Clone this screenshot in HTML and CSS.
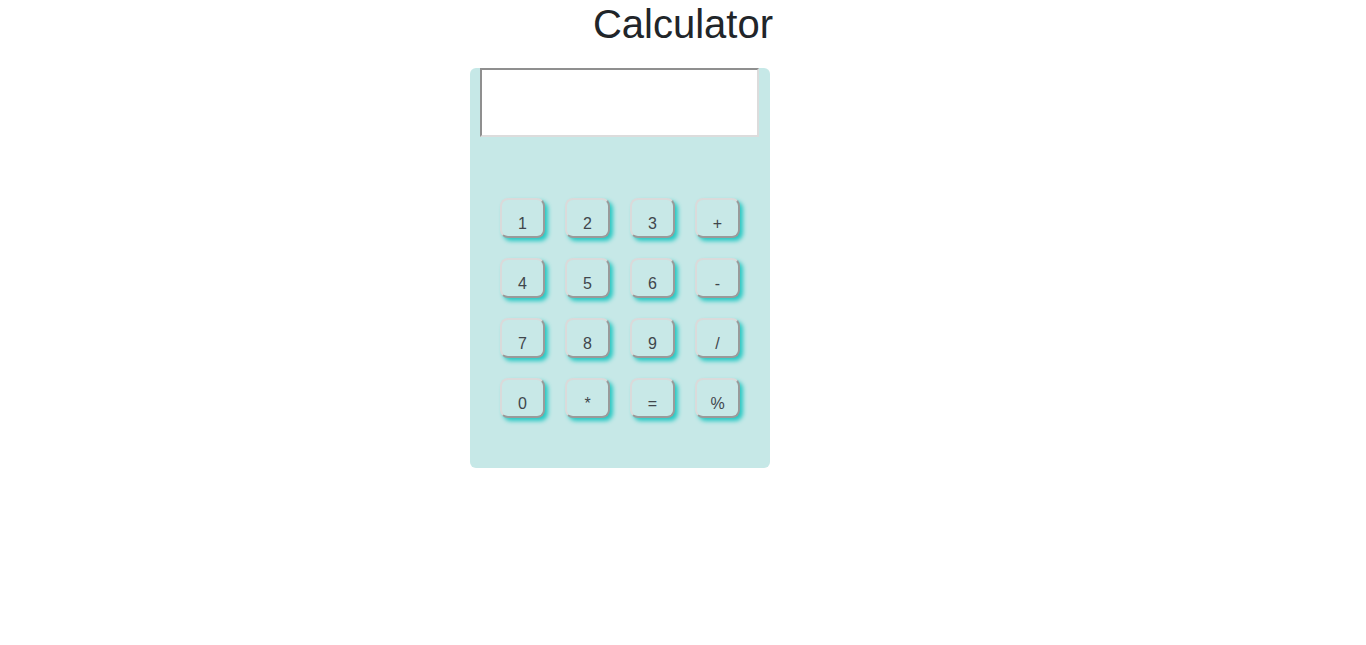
FILE: index.html
```html
<!DOCTYPE html>
<html>
<head>
<meta charset="utf-8">
<link rel="stylesheet" href="styles.css">
</head>
<body>
<h1 class="title">Calculator</h1>
<div class="calc">
  <input class="screen" type="text">
  <div class="keys">
    <button class="key">1</button>
    <button class="key">2</button>
    <button class="key">3</button>
    <button class="key">+</button>
    <button class="key">4</button>
    <button class="key">5</button>
    <button class="key">6</button>
    <button class="key">-</button>
    <button class="key">7</button>
    <button class="key">8</button>
    <button class="key">9</button>
    <button class="key">/</button>
    <button class="key">0</button>
    <button class="key">*</button>
    <button class="key">=</button>
    <button class="key">%</button>
  </div>
</div>
</body>
</html>
```

FILE: styles.css
```css
body {
  margin: 0;
  font-family: "Liberation Sans", Arial, sans-serif;
  color: #212529;
  background: #fff;
}
.title {
  margin: 0 0 20px;
  font-size: 40px;
  font-weight: 400;
  line-height: 48px;
  text-align: center;
}
.calc {
  margin-left: 470px;
  width: 300px;
  height: 400px;
  background: #c6e8e7;
  border-radius: 6px;
  box-sizing: border-box;
  padding: 0 11px 0 10px;
}
.screen {
  display: block;
  box-sizing: border-box;
  width: 279px;
  height: 69px;
  margin: 0;
  padding: 0;
  border: 2px solid;
  border-color: #8f8f8f #dcdcdc #dcdcdc #8f8f8f;
  background: #fff;
  outline: none;
}
.keys {
  display: grid;
  grid-template-columns: repeat(4, 44px);
  grid-auto-rows: 40px;
  column-gap: 21px;
  row-gap: 20px;
  margin: 61px 0 0 20px;
}
.key {
  box-sizing: border-box;
  width: 45px;
  height: 40px;
  padding: 12px 0 0;
  border: 2px solid;
  border-color: #dadada #9a9a9a #9a9a9a #dadada;
  border-radius: 8px;
  background: #c8e8e7;
  color: #40464c;
  font-family: "Liberation Sans", Arial, sans-serif;
  font-size: 16px;
  box-shadow: 3px 3px 4px #27c8c3;
}
```
